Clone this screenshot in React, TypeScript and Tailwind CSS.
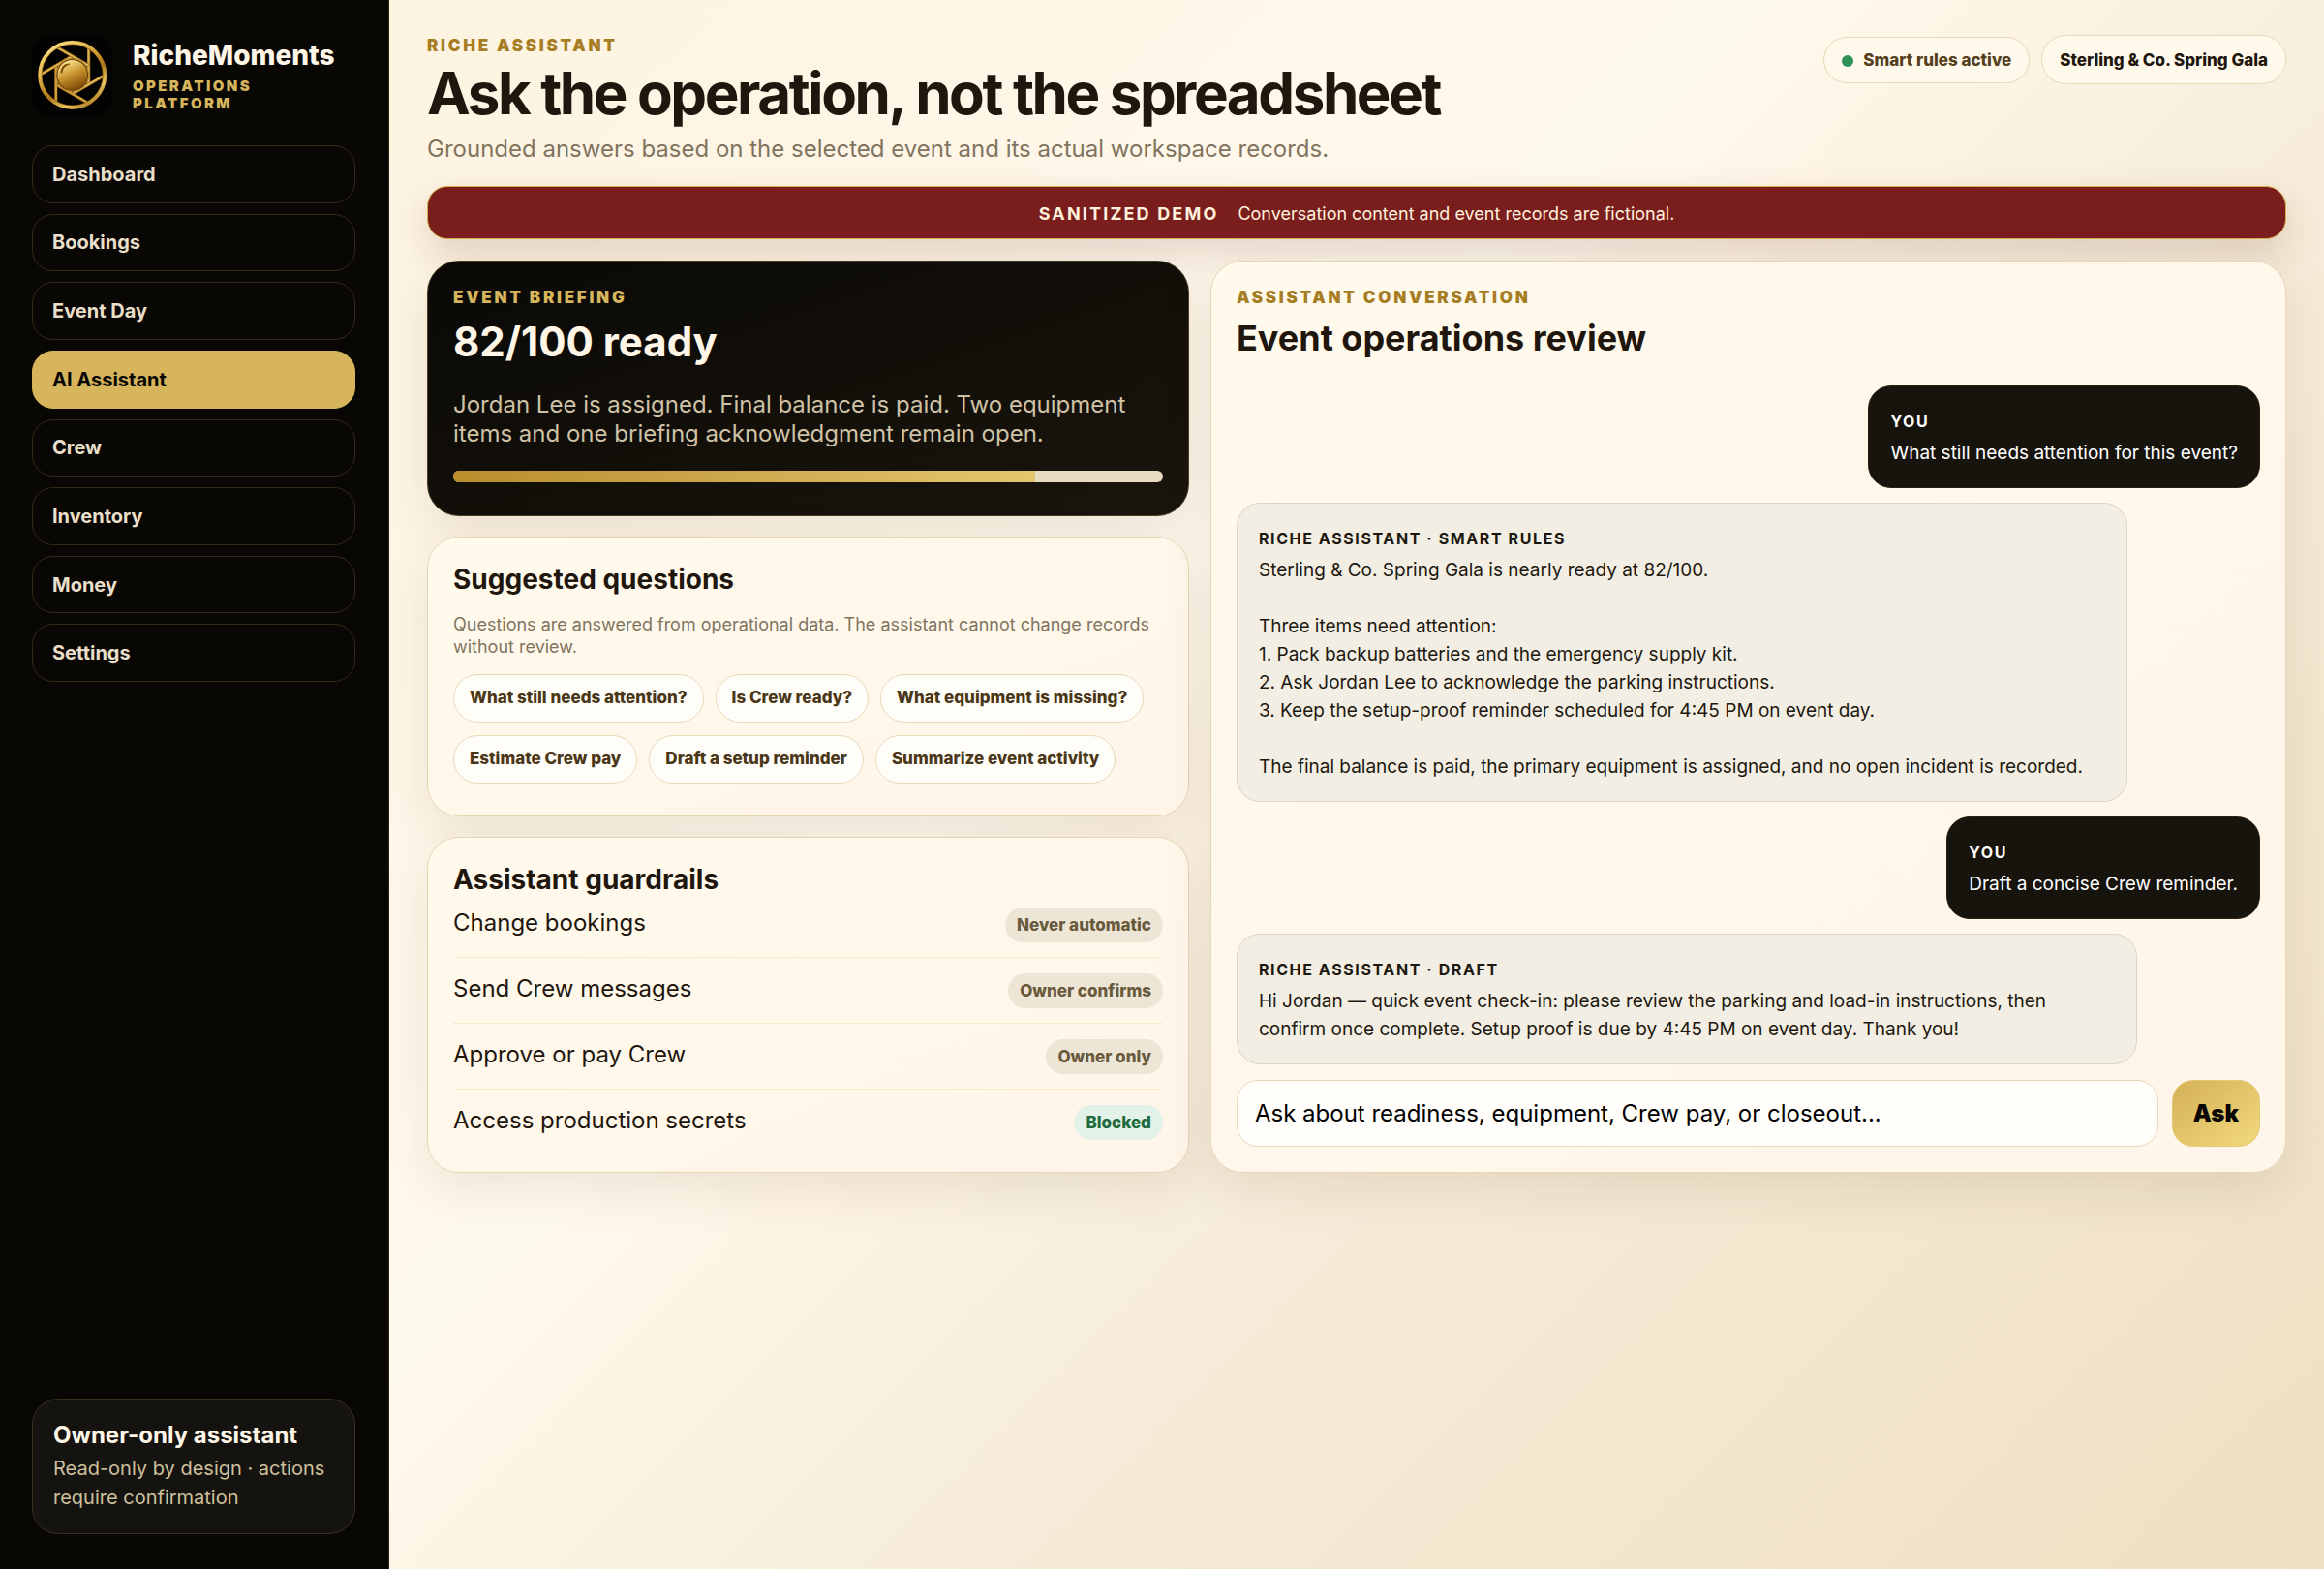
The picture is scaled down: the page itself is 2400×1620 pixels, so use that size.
import React, { useId, useState } from "react";

const NAV_ITEMS = ["Dashboard", "Bookings", "Event Day", "AI Assistant", "Crew", "Inventory", "Money", "Settings"];

const QUESTIONS = [
  "What still needs attention?",
  "Is Crew ready?",
  "What equipment is missing?",
  "Estimate Crew pay",
  "Draft a setup reminder",
  "Summarize event activity",
];

const GUARDRAILS = [
  { action: "Change bookings", rule: "Never automatic", blocked: false },
  { action: "Send Crew messages", rule: "Owner confirms", blocked: false },
  { action: "Approve or pay Crew", rule: "Owner only", blocked: false },
  { action: "Access production secrets", rule: "Blocked", blocked: true },
];

const REVIEW = `Sterling & Co. Spring Gala is nearly ready at 82/100.

Three items need attention:
1. Pack backup batteries and the emergency supply kit.
2. Ask Jordan Lee to acknowledge the parking instructions.
3. Keep the setup-proof reminder scheduled for 4:45 PM on event day.

The final balance is paid, the primary equipment is assigned, and no open incident is recorded.`;

const DRAFT = `Hi Jordan — quick event check-in: please review the parking and load-in instructions, then
confirm once complete. Setup proof is due by 4:45 PM on event day. Thank you!`;

const READINESS = 82;

const cardClass = "rounded-[33px] border border-[#e6d6b4] bg-linear-to-br from-[#fffaec] to-[#fff5e8] p-[26px] shadow-[0_18px_52px_rgba(69,45,12,0.1)]";
const eyebrowClass = "text-[17px] leading-[22px] font-black tracking-[0.16em] uppercase";

function Logo() {
  const id = useId();
  return (
    <svg viewBox="0 0 84 84" className="size-[84px] shrink-0" role="img" aria-label="RicheMoments">
      <defs>
        <linearGradient id={`${id}ring`} gradientUnits="userSpaceOnUse" x1="20" y1="8" x2="62" y2="76">
          <stop offset="0" stopColor="#fbe48c" />
          <stop offset="0.35" stopColor="#d9ab40" />
          <stop offset="0.6" stopColor="#b07a1c" />
          <stop offset="0.8" stopColor="#e9c765" />
          <stop offset="1" stopColor="#a06c14" />
        </linearGradient>
        <linearGradient id={`${id}ball`} x1="0.25" y1="0.05" x2="0.7" y2="1">
          <stop offset="0" stopColor="#fbe590" />
          <stop offset="0.45" stopColor="#c9952f" />
          <stop offset="1" stopColor="#7c4503" />
        </linearGradient>
      </defs>
      <rect width="84" height="84" rx="21" fill="#030303" />
      <g transform="translate(41.7 41.4)" fill="none">
        {[0, 60, 120, 180, 240, 300].map((angle) => (
          <g key={angle} transform={`rotate(${angle})`}>
            <path d="M17 -29V10" stroke="#7d500d" strokeWidth="3.4" />
            <path d="M16.8 -29V10" stroke={angle > 60 && angle < 240 ? "#cf9f3b" : "#dcb450"} strokeWidth="2.2" />
          </g>
        ))}
        <circle r="33.4" stroke="#8a5a10" strokeWidth="4.4" />
      </g>
      <circle cx="41.7" cy="41.4" r="33.6" fill="none" stroke={`url(#${id}ring)`} strokeWidth="3.4" />
      <circle cx="41.7" cy="41.4" r="17" fill="#5d3604" />
      <circle cx="41.7" cy="41.4" r="16.8" fill="none" stroke="#c8963a" strokeWidth="1" />
      <circle cx="41.7" cy="41.4" r="15.4" fill={`url(#${id}ball)`} />
      <path d="M30.5 38.5C31 34.5 33 31.8 36 30.8" fill="none" stroke="#7a4a06" strokeWidth="2" strokeLinecap="round" />
      <circle cx="38" cy="30.3" r="1" fill="#8a560a" />
    </svg>
  );
}

function Bubble({ who, mine, className, children }: { who: string; mine?: boolean; className?: string; children: React.ReactNode }) {
  return (
    <article className={`${mine ? "self-end border-[#2a2010] bg-[#17140d] text-white" : "self-start border-[#ddd5c6] bg-[#f3eee3] text-[#1d180f]"} rounded-3xl border px-[22px] pt-[22px] pb-[21px] ${className ?? "max-w-[88%]"}`}>
      <h3 className="mb-1 text-[16px] leading-7 font-bold tracking-[0.1em] uppercase">{who}</h3>
      <p className="text-[19px] leading-[29px] whitespace-pre-line">{children}</p>
    </article>
  );
}

export default function App() {
  const [active, setActive] = useState("AI Assistant");
  const [question, setQuestion] = useState("Ask about readiness, equipment, Crew pay, or closeout...");

  return (
    <div className="flex min-h-screen bg-linear-[135deg,#faf0da_0%,#fcf3e0_10%,#fff6e8_30%,#fffaee_45%,#fef4e6_51%,#f9f0df_58%,#f6ebd8_66%,#f1e4c9_88%,#efdfc1_100%] font-['Inter',sans-serif] text-[#1f160e]">
      <aside className="flex w-[402px] shrink-0 flex-col border-r border-[#2d2415] bg-[#080704] py-9 pr-[34px] pl-[33px]">
        <div className="flex items-center gap-5">
          <Logo />
          <div>
            <p className="text-[28px] leading-[34px] font-extrabold text-[#fff6e8]">RicheMoments</p>
            <p className="mt-1.5 w-40 text-[15px] leading-[18px] font-black tracking-[0.16em] text-[#d6b55c] uppercase">Operations Platform</p>
          </div>
        </div>

        <nav className="mt-[30px] grid h-[554px] auto-rows-fr gap-[11px]">
          {NAV_ITEMS.map((item) => (
            <button
              key={item}
              type="button"
              onClick={() => setActive(item)}
              className={`rounded-[22px] border px-5 text-left text-[20px] font-bold ${item === active ? "border-[#d6b55c] bg-[#d6b55c] text-[#080704]" : "border-[#332914] text-[#eadfc9]"}`}
            >
              {item}
            </button>
          ))}
        </nav>

        <div className="mt-auto rounded-[27px] border border-[#3a3120] bg-[#151310] px-[21px] py-[22px]">
          <p className="text-[24px] leading-[30px] font-bold text-[#fff6e8]">Owner-only assistant</p>
          <p className="mt-1 text-[20px] leading-[30px] text-[#cfc09c]">Read-only by design · actions require confirmation</p>
        </div>
      </aside>

      <main className="min-w-0 flex-1 px-[39px] py-9">
        <header className="flex items-start justify-between">
          <div>
            <p className={`${eyebrowClass} text-[#a77d24]`}>Riche Assistant</p>
            <h1 className="mt-1.5 text-[60px] leading-[64px] font-bold tracking-[-0.04em]">Ask the operation, not the spreadsheet</h1>
            <p className="mt-[11px] text-[24px] leading-[29px] text-[#81745f]">Grounded answers based on the selected event and its actual workspace records.</p>
          </div>
          <div className="flex items-center gap-3">
            <span className="flex h-12 items-center gap-2.5 rounded-full border border-[#e8d9b8] bg-[#fff9ec] px-[18px] pt-0.5 text-[17px] font-extrabold text-[#54401d]">
              <span className="size-3 rounded-full bg-[#2f9158]" />
              Smart rules active
            </span>
            <button type="button" className="h-[51px] rounded-full border border-[#e8d9b8] bg-[#fff9ec] px-[18px] pt-0.5 text-[17px] font-extrabold">
              Sterling &amp; Co. Spring Gala
            </button>
          </div>
        </header>

        <div className="mt-6 flex h-[55px] items-center justify-center gap-5 rounded-[21px] border border-[#d6b04b] bg-[#7a1e1d] pt-0.5 text-[18px] text-[#fff1dc] shadow-[0_15px_38px_rgba(85,30,20,0.16)]">
          <strong className="tracking-[0.12em]">SANITIZED DEMO</strong>
          <span>Conversation content and event records are fictional.</span>
        </div>

        <div className="mt-[22px] grid grid-cols-[minmax(0,0.85fr)_minmax(0,1.2fr)] gap-[22px]">
          <div className="flex flex-col gap-[21px]">
            {/* Event briefing */}
            <section className="rounded-[33px] border border-[#4a3c20] bg-linear-to-br from-[#0a0906] to-[#1a150d] p-[26px] pb-[34px] shadow-[0_18px_52px_rgba(69,45,12,0.1)]">
              <p className={`${eyebrowClass} text-[#d6b55c]`}>Event Briefing</p>
              <h2 className="mt-2.5 text-[42px] leading-[50px] font-bold text-[#fff6e8]">82/100 ready</h2>
              <p className="mt-[25px] text-[24px] leading-[30px] text-[#cfc2a6]">
                Jordan Lee is assigned. Final balance is paid. Two equipment items and one briefing acknowledgment remain open.
              </p>
              <div role="progressbar" aria-label="Readiness" aria-valuenow={READINESS} aria-valuemin={0} aria-valuemax={100} className="mt-[23px] h-3 overflow-hidden rounded-full bg-[#e8dcc0]">
                <div className="h-full bg-linear-to-r from-[#b98d2a] to-[#e4c66f]" style={{ width: `${READINESS}%` }} />
              </div>
            </section>

            {/* Suggested questions */}
            <section className={cardClass}>
              <h2 className="text-[28px] leading-[34px] font-bold">Suggested questions</h2>
              <p className="mt-[18px] text-[18px] leading-[23px] text-[#81745f]">
                Questions are answered from operational data. The assistant cannot change records without review.
              </p>
              <div className="mt-[17px] flex flex-wrap gap-x-3 gap-y-[13px] pb-[7px]">
                {QUESTIONS.map((q) => (
                  <button key={q} type="button" onClick={() => setQuestion(q)} className="h-[50px] rounded-full border border-[#e8d9b8] bg-[#fffdf7] px-4 text-[17px] font-extrabold text-[#4a3717]">
                    {q}
                  </button>
                ))}
              </div>
            </section>

            {/* Guardrails */}
            <section className={cardClass}>
              <h2 className="text-[28px] leading-[34px] font-bold">Assistant guardrails</h2>
              <ul className="divide-y divide-[#f7eacb]">
                {GUARDRAILS.map(({ action, rule, blocked }) => (
                  <li key={action} className="flex items-baseline justify-between pt-4 pb-[15px] first:pt-3 last:pb-[7px]">
                    <span className="text-[24px] leading-[29px]">{action}</span>
                    <span className={`rounded-full px-3 text-[17px] leading-9 font-extrabold ${blocked ? "bg-[#e2f2e8] text-[#1f6b3c]" : "bg-[#ede6d7] text-[#6a5a3c]"}`}>{rule}</span>
                  </li>
                ))}
              </ul>
            </section>
          </div>

          {/* Conversation */}
          <section className={`${cardClass} flex flex-col`}>
            <p className={`${eyebrowClass} text-[#a77d24]`}>Assistant Conversation</p>
            <h2 className="mt-[9px] text-[36px] leading-[44px] font-bold">Event operations review</h2>
            <div className="mt-[27px] flex flex-col gap-[15px]">
              <Bubble who="You" mine>What still needs attention for this event?</Bubble>
              <Bubble who="Riche Assistant · Smart Rules" className="w-[87%]">{REVIEW}</Bubble>
              <Bubble who="You" mine>Draft a concise Crew reminder.</Bubble>
              <Bubble who="Riche Assistant · Draft" className="w-[88%]">{DRAFT}</Bubble>
            </div>
            <form className="mt-auto flex gap-3.5" onSubmit={(e) => e.preventDefault()}>
              <input
                aria-label="Ask the assistant"
                value={question}
                onChange={(e) => setQuestion(e.target.value)}
                className="h-[69px] min-w-0 flex-1 rounded-[22px] border border-[#e8d9b8] bg-[#fffefa] px-[18px] text-[24px] text-black outline-none"
              />
              <button type="submit" className="h-[69px] rounded-[22px] border border-[#e3c878] bg-linear-to-br from-[#d4b157] to-[#f3d97c] px-[21px] text-[24px] font-black text-[#080704]">
                Ask
              </button>
            </form>
          </section>
        </div>
      </main>
    </div>
  );
}
